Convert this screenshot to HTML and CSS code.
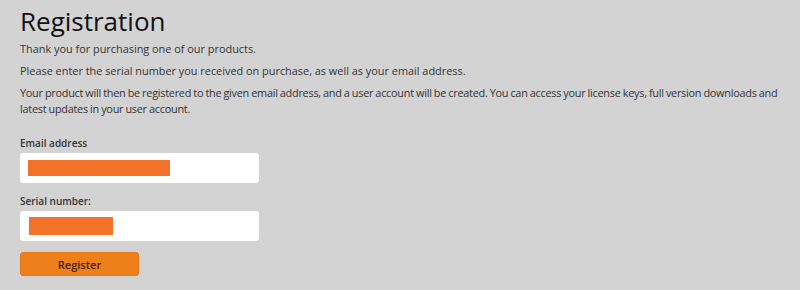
FILE: index.html
```html
<!DOCTYPE html>
<html lang="en">
<head>
    <meta charset="UTF-8">
    <title>Registration</title>
    <link rel="stylesheet" href="styles.css">
</head>
<body>

<div class="page">
    <h1>Registration</h1>
    <p>Thank you for purchasing one of our products.</p>
    <p>Please enter the serial number you received on purchase, as well as your email address.</p>
    <p class="long-text">Your product will then be registered to the given email address, and a user account will be created. You can access your license keys, full version downloads and latest updates in your user account.</p>

    <form class="reg-form">
        <label class="field-label">Email address</label>
        <div class="field-input">
            <span class="redact redact-email"></span>
        </div>

        <label class="field-label">Serial number:</label>
        <div class="field-input">
            <span class="redact redact-serial"></span>
        </div>

        <button type="button" class="reg-button">Register</button>
    </form>
</div>

</body>
</html>
```

FILE: styles.css
```css
body {
    font-family: "Open Sans", Arial, sans-serif;
    background-color: #d3d3d3;
    color: #333;
    margin: 0;
}

.page {
    padding: 5px 8px 0 20px;
}

h1 {
    font-size: 26px;
    font-weight: normal;
    color: #111;
    margin: 0 0 4px 0;
    line-height: 32px;
}

p {
    font-size: 10.9px;
    line-height: 16px;
    margin: 0 0 6px 0;
}

/* long paragraph is a bit tighter in the original */
p.long-text {
    letter-spacing: -0.26px;
    word-spacing: -0.4px;
}

/* form */
.reg-form {
    margin-top: 19px;
    display: flex;
    flex-direction: column;
    align-items: flex-start;
}

.field-label {
    font-size: 10px;
    font-weight: 600;
    color: #333;
    line-height: 14px;
    margin-bottom: 3px;
}

.field-input {
    width: 239px;
    height: 30px;
    background: white;
    border-radius: 3px;
    margin-bottom: 11px;
    display: flex;
    align-items: center;
    padding-left: 8px;
    box-sizing: border-box;
}

.redact {
    display: block;
    background: #f2722a;
}

.redact-email {
    width: 142px;
    height: 16px;
}

.redact-serial {
    width: 84px;
    height: 18px;
    margin-left: 1px;
}

.reg-button {
    width: 119px;
    height: 24px;
    background: #ef7f1a;
    border: 1px solid #e57716;
    border-radius: 3px;
    font-family: "Open Sans", Arial, sans-serif;
    font-size: 11px;
    font-weight: 600;
    color: #3a2210;
    cursor: pointer;
}
```
